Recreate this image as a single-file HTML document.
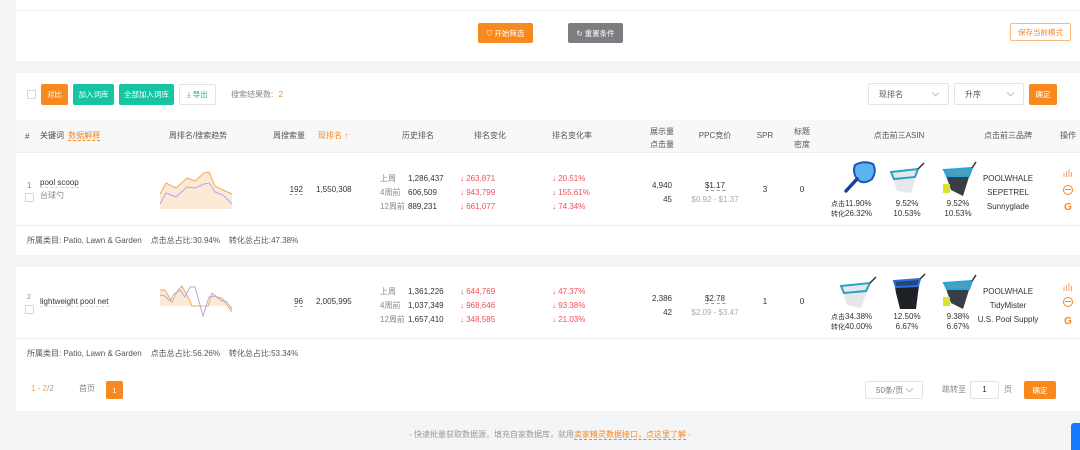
<!DOCTYPE html>
<html><head><meta charset="utf-8"><style>
*{margin:0;padding:0;box-sizing:border-box}
body{width:1080px;height:449px;background:#f4f5f7;position:relative;overflow:hidden;font-family:"Liberation Sans","Noto Sans CJK SC",sans-serif;font-size:8px;color:#333}
.a{position:absolute;white-space:nowrap;line-height:1}
svg.a{display:block}
.p{position:absolute;background:#fff}
.btn{position:absolute;color:#fff;border-radius:2px;display:flex;align-items:center;justify-content:center;font-size:7.5px}
.g{color:#888}.r{color:#f0505a}.o{color:#f7861c}
.c{text-align:center;transform:translateX(-50%)}
.rt{transform:translateX(-100%)}
.sel{position:absolute;border:1px solid #e3e3e3;border-radius:2px;background:#fff;color:#555;font-size:8px;padding-left:10px;display:flex;align-items:center}
.sel:after{content:"";position:absolute;right:10px;top:50%;width:4px;height:4px;border-right:1px solid #bbb;border-bottom:1px solid #bbb;transform:translateY(-70%) rotate(45deg)}
.cb{position:absolute;width:9px;height:9px;border:1px solid #d6d6d6;border-radius:1px;background:#fff}
.u{border-bottom:1px dashed #999}
.lb{font-size:7px}
</style></head><body>
<div class="p" style="left:16px;top:0;width:1064px;height:61px"></div>
<div class="a" style="left:16px;top:10px;width:1064px;height:1px;background:#f0f0f0"></div>
<div class="btn" style="left:478px;top:23px;width:55px;height:20px;background:#f7891e">⛉ 开始筛选</div>
<div class="btn" style="left:568px;top:23px;width:55px;height:20px;background:#7b7d80">↻ 重置条件</div>
<div class="btn" style="left:1010px;top:23px;width:61px;height:18px;border:1px solid #f9b97a;color:#f7861c;background:#fff">保存当前模式</div>

<div class="p" style="left:16px;top:73px;width:1064px;height:182px"></div>
<div class="cb" style="left:27px;top:90px"></div>
<div class="btn" style="left:41px;top:84px;width:27px;height:21px;background:#f7891e">对比</div>
<div class="btn" style="left:73px;top:84px;width:41px;height:21px;background:#17c4a2">加入词库</div>
<div class="btn" style="left:119px;top:84px;width:55px;height:21px;background:#17c4a2">全部加入词库</div>
<div class="btn" style="left:179px;top:84px;width:37px;height:21px;border:1px solid #e3e3e3;background:#fff;color:#17b395">⤓ 导出</div>
<div class="a g" style="left:231px;top:91px">搜索结果数: <span class="o" style="margin-left:3px">2</span></div>
<div class="sel" style="left:868px;top:83px;width:81px;height:22px">现排名</div>
<div class="sel" style="left:954px;top:83px;width:70px;height:22px">升序</div>
<div class="btn" style="left:1029px;top:84px;width:28px;height:21px;background:#f7891e">确定</div>

<div class="a" style="left:16px;top:120px;width:1064px;height:33px;background:#f8f8f9;border-bottom:1px solid #eee"></div>
<div class="a" style="left:25px;top:133px;color:#555">#</div>
<div class="a" style="left:40px;top:132px;color:#444">关键词 <span class="o u" style="margin-left:2px;border-color:#f7861c">数据解释</span></div>
<div class="a c" style="left:198px;top:132px;color:#555">周排名/搜索趋势</div>
<div class="a" style="left:273px;top:132px;color:#555">周搜索量</div>
<div class="a o" style="left:318px;top:132px">现排名 ↑</div>
<div class="a c" style="left:418px;top:132px;color:#555">历史排名</div>
<div class="a c" style="left:490px;top:132px;color:#555">排名变化</div>
<div class="a" style="left:552px;top:132px;color:#555">排名变化率</div>
<div class="a c" style="left:662px;top:125px;color:#555;line-height:13px">展示量<br>点击量</div>
<div class="a c" style="left:715px;top:132px;color:#555">PPC竞价</div>
<div class="a c" style="left:765px;top:132px;color:#555">SPR</div>
<div class="a c" style="left:802px;top:125px;color:#555;line-height:13px">标题<br>密度</div>
<div class="a c" style="left:899px;top:132px;color:#555">点击前三ASIN</div>
<div class="a c" style="left:1008px;top:132px;color:#555">点击前三品牌</div>
<div class="a c" style="left:1068px;top:132px;color:#555">操作</div>

<!-- row 1 -->
<div class="a g" style="left:27px;top:182px">1</div>
<div class="cb" style="left:25px;top:193px"></div>
<div class="a" style="left:40px;top:179px"><span class="u" style="border-color:#ccc">pool scoop</span></div>
<div class="a g" style="left:40px;top:192px">台球勺</div>
<svg class="a" style="left:160px;top:170px" width="74" height="40"><path d="M0,24 L6,13 L16,18 L27,8 L35,11 L44,3 L49,2 L55,16 L63,20 L72,24 L72,39 L0,39Z" fill="#fde9d6"/><polyline points="0,24 6,13 16,18 27,8 35,11 44,3 49,2 55,16 63,20 72,24" fill="none" stroke="#f7a95c" stroke-width="1"/><polyline points="0,34 6,23 16,27 27,17 35,18 44,14 49,13 55,22 63,25 72,34" fill="none" stroke="#a9acec" stroke-width="1"/></svg>
<div class="a rt" style="left:303px;top:186px"><span class="u">192</span></div>
<div class="a" style="left:316px;top:186px">1,550,308</div>
<div class="a g" style="left:380px;top:172px;line-height:14px">上周<br>4周前<br>12周前</div>
<div class="a" style="left:408px;top:172px;line-height:14px">1,286,437<br>606,509<br>889,231</div>
<div class="a r" style="left:460px;top:172px;line-height:14px">↓ 263,871<br>↓ 943,799<br>↓ 661,077</div>
<div class="a r" style="left:552px;top:172px;line-height:14px">↓ 20.51%<br>↓ 155.61%<br>↓ 74.34%</div>
<div class="a" style="left:672px;top:179px;line-height:14px;text-align:right;transform:translateX(-100%)">4,940<br>45</div>
<div class="a c" style="left:715px;top:179px;line-height:14px"><span class="u">$1.17</span><br><span style="color:#aaa">$0.92 - $1.37</span></div>
<div class="a c" style="left:765px;top:186px">3</div>
<div class="a c" style="left:802px;top:186px">0</div>
<div class="a lb" style="left:831px;top:200px;line-height:10px">点击<br>转化</div>
<div class="a" style="left:845px;top:199px;line-height:10px">11.90%<br>26.32%</div>
<div class="a c" style="left:907px;top:199px;line-height:10px">9.52%<br>10.53%</div>
<div class="a c" style="left:958px;top:199px;line-height:10px">9.52%<br>10.53%</div>
<div class="a c" style="left:1008px;top:172px;line-height:14px">POOLWHALE<br>SEPETREL<br>Sunnyglade</div>
<svg class="a" style="left:842px;top:160px" width="36" height="36" viewBox="0 0 36 36"><path d="M13,5 Q22,0 31,4 Q35,11 30,19 Q22,25 16,20 Q10,13 13,5Z" fill="#5ab4ee" stroke="#1d55b0" stroke-width="2"/><path d="M15,19 L4,31" stroke="#1b3f9a" stroke-width="3.5" stroke-linecap="round"/></svg>
<svg class="a" style="left:888px;top:161px" width="38" height="35" viewBox="0 0 38 35"><path d="M3,11 L30,8 L26,22 L23,32 L9,30 Z" fill="#e6e7ea"/><path d="M3,11 L30,8 L27,16 L6,18Z" fill="none" stroke="#2aa0c8" stroke-width="2"/><path d="M30,8 L36,2" stroke="#333" stroke-width="1.5"/></svg>
<svg class="a" style="left:939px;top:160px" width="38" height="38" viewBox="0 0 38 38"><path d="M5,10 L33,8 L30,17 L24,36 L12,30 Z" fill="#3a3f45"/><path d="M5,10 L33,8 L30,16 L8,16Z" fill="#4b9fbd" stroke="#26a4dc" stroke-width="2"/><path d="M33,8 L37,2" stroke="#333" stroke-width="1.5"/><rect x="4" y="24" width="7" height="9" fill="#d7e628"/></svg>
<svg class="a" style="left:1063px;top:168px" width="10" height="9"><path d="M1,9V5M3.5,9V3M6,9V1M8.5,9V4" stroke="#f7a06a" stroke-width="1"/></svg>
<div class="a" style="left:1063px;top:185px;width:10px;height:10px;border:1.3px solid #f7861c;border-radius:50%"><div style="position:absolute;left:1px;right:1px;top:3px;height:1px;background:#f7861c"></div></div>
<div class="a c o" style="left:1068px;top:203px;font-weight:bold;font-size:10px">G</div>
<div class="a" style="left:16px;top:225px;width:1064px;height:1px;background:#eee"></div>
<div class="a" style="left:27px;top:237px;color:#555">所属类目: Patio, Lawn &amp; Garden &nbsp;&nbsp; 点击总占比:30.94% &nbsp;&nbsp; 转化总占比:47.38%</div>

<!-- panel 2 -->
<div class="p" style="left:16px;top:267px;width:1064px;height:144px"></div>
<div class="a g" style="left:27px;top:294px;font-size:7px">2</div>
<div class="cb" style="left:25px;top:305px"></div>
<div class="a" style="left:40px;top:298px"><span class="u" style="border-color:#ddd">lightweight pool net</span></div>
<svg class="a" style="left:160px;top:285px" width="74" height="40"><path d="M0,5 L5,5 L12,17 L18,5 L22,1 L30,16 L32,21 L48,21 L52,8 L57,12 L62,13 L72,27 L72,21 L0,21Z" fill="#fde9d6"/><polyline points="0,5 5,5 12,17 18,5 22,1 30,16 32,21 48,21 52,8 57,12 62,13 72,27" fill="none" stroke="#f7a95c" stroke-width="1"/><polyline points="0,10 5,11 10,16 14,9 20,5 25,12 30,2 35,2 43,31 49,12 55,11 62,16 66,16 72,24" fill="none" stroke="#a9acec" stroke-width="1"/></svg>
<div class="a rt" style="left:303px;top:298px"><span class="u">96</span></div>
<div class="a" style="left:316px;top:298px">2,005,995</div>
<div class="a g" style="left:380px;top:285px;line-height:14px">上周<br>4周前<br>12周前</div>
<div class="a" style="left:408px;top:285px;line-height:14px">1,361,226<br>1,037,349<br>1,657,410</div>
<div class="a r" style="left:460px;top:285px;line-height:14px">↓ 644,769<br>↓ 968,646<br>↓ 348,585</div>
<div class="a r" style="left:552px;top:285px;line-height:14px">↓ 47.37%<br>↓ 93.38%<br>↓ 21.03%</div>
<div class="a" style="left:672px;top:292px;line-height:14px;text-align:right;transform:translateX(-100%)">2,386<br>42</div>
<div class="a c" style="left:715px;top:292px;line-height:14px"><span class="u">$2.78</span><br><span style="color:#aaa">$2.09 - $3.47</span></div>
<div class="a c" style="left:765px;top:298px">1</div>
<div class="a c" style="left:802px;top:298px">0</div>
<div class="a lb" style="left:831px;top:313px;line-height:10px">点击<br>转化</div>
<div class="a" style="left:845px;top:312px;line-height:10px">34.38%<br>40.00%</div>
<div class="a c" style="left:907px;top:312px;line-height:10px">12.50%<br>6.67%</div>
<div class="a c" style="left:958px;top:312px;line-height:10px">9.38%<br>6.67%</div>
<div class="a c" style="left:1008px;top:285px;line-height:14px">POOLWHALE<br>TidyMister<br>U.S. Pool Supply</div>
<svg class="a" style="left:838px;top:275px" width="40" height="36" viewBox="0 0 40 36"><path d="M3,11 L32,8 L27,22 L23,33 L9,30 Z" fill="#e6e7ea"/><path d="M3,11 L32,8 L28,16 L6,18Z" fill="none" stroke="#2aa0c8" stroke-width="2"/><path d="M32,8 L38,2" stroke="#333" stroke-width="1.5"/></svg>
<svg class="a" style="left:890px;top:273px" width="38" height="38" viewBox="0 0 38 38"><path d="M4,8 L30,6 L28,20 L26,36 L10,36 L6,20Z" fill="#1e2126"/><path d="M4,8 L30,6 L28,13 L6,14Z" fill="#28457a" stroke="#2e6ee0" stroke-width="2"/><path d="M30,6 L35,1" stroke="#333" stroke-width="1.5"/></svg>
<svg class="a" style="left:939px;top:273px" width="38" height="38" viewBox="0 0 38 38"><path d="M5,10 L33,8 L30,17 L24,36 L12,30 Z" fill="#3a3f45"/><path d="M5,10 L33,8 L30,16 L8,16Z" fill="#4b9fbd" stroke="#26a4dc" stroke-width="2"/><path d="M33,8 L37,2" stroke="#333" stroke-width="1.5"/><rect x="4" y="24" width="7" height="9" fill="#d7e628"/></svg>
<svg class="a" style="left:1063px;top:282px" width="10" height="9"><path d="M1,9V5M3.5,9V3M6,9V1M8.5,9V4" stroke="#f7a06a" stroke-width="1"/></svg>
<div class="a" style="left:1063px;top:297px;width:10px;height:10px;border:1.3px solid #f7861c;border-radius:50%"><div style="position:absolute;left:1px;right:1px;top:3px;height:1px;background:#f7861c"></div></div>
<div class="a c o" style="left:1068px;top:317px;font-weight:bold;font-size:10px">G</div>
<div class="a" style="left:16px;top:338px;width:1064px;height:1px;background:#eee"></div>
<div class="a" style="left:27px;top:350px;color:#555">所属类目: Patio, Lawn &amp; Garden &nbsp;&nbsp; 点击总占比:56.26% &nbsp;&nbsp; 转化总占比:53.34%</div>

<div class="a o" style="left:31px;top:385px;opacity:.8">1 - 2<span style="color:#888">/2</span></div>
<div class="a g" style="left:79px;top:385px">首页</div>
<div class="btn" style="left:106px;top:381px;width:17px;height:18px;background:#f7891e">1</div>
<div class="sel" style="left:865px;top:381px;width:58px;height:18px;color:#777">50条/页</div>
<div class="a g" style="left:942px;top:386px">跳转至</div>
<div class="a" style="left:970px;top:381px;width:29px;height:18px;border:1px solid #e3e3e3;border-radius:2px;text-align:center;line-height:16px">1</div>
<div class="a g" style="left:1004px;top:386px">页</div>
<div class="btn" style="left:1024px;top:381px;width:32px;height:18px;background:#f7891e">确定</div>

<div class="a c" style="left:550px;top:431px;color:#999;font-size:8px">- 快速批量获取数据源，填充自家数据库，就用<span class="o u" style="border-color:#f7861c">卖家精灵数据接口，点这里了解</span> -</div>
<div class="a" style="left:1071px;top:423px;width:12px;height:27px;background:#1677ff;border-radius:3px 0 0 0"></div>
</body></html>
